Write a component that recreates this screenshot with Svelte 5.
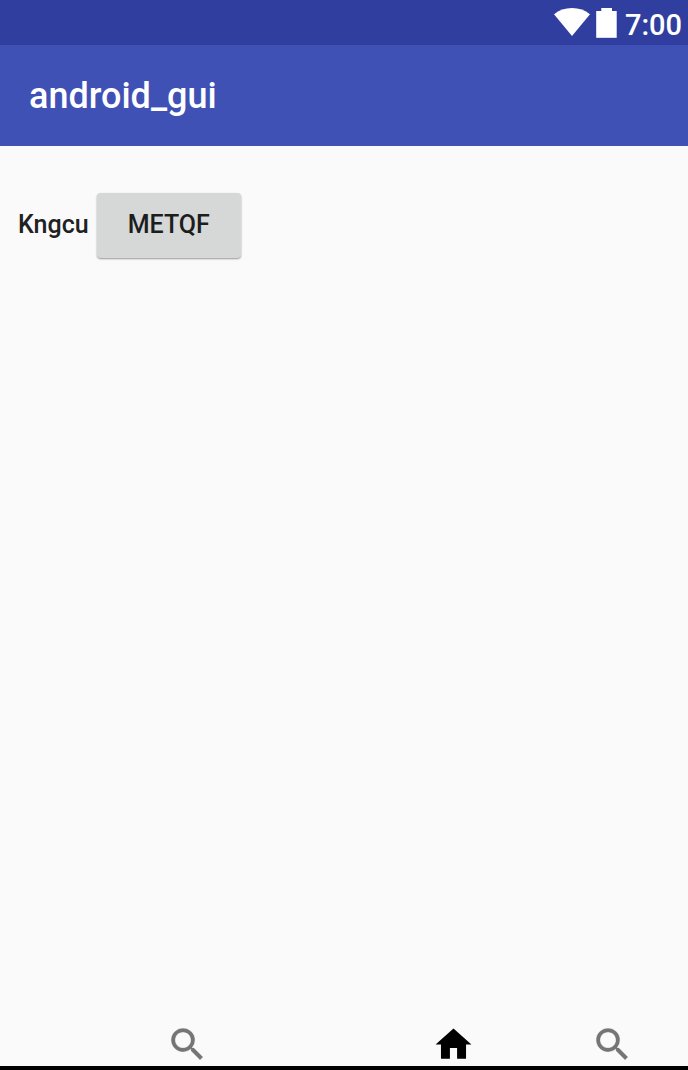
<script>
  const searchPath =
    'M15.5 14h-.79l-.28-.27A6.471 6.471 0 0 0 16 9.5 6.5 6.5 0 1 0 9.5 16c1.61 0 3.09-.59 4.23-1.57l.27.28v.79l5 4.99L20.49 19l-4.99-5zm-6 0C7.01 14 5 11.99 5 9.5S7.01 5 9.5 5 14 7.01 14 9.5 11.99 14 9.5 14z';
  const homePath = 'M10 20v-6h4v6h5v-8h3L12 3 2 12h3v8z';
  const items = [
    { label: 'Search', path: searchPath, active: false },
    { label: 'Home', path: homePath, active: true },
    { label: 'Search more', path: searchPath, active: false }
  ];
</script>

<div class="screen">
  <div class="status">
    <svg width="36" height="28" viewBox="0 0 36 28" aria-hidden="true">
      <path d="M0 6.2C5 2 11 0 18 0s13 2 18 6.2L18 28z" fill="#fff" />
    </svg>
    <svg width="21" height="30" viewBox="0 0 21 30" aria-hidden="true">
      <path d="M5.3 0h10.7v3h4.7v26H0.2V3h5.1z" fill="#fff" />
      <path d="M0.2 29h20.5v1H0.2z" fill="#d9dcf0" />
    </svg>
    <time>7:00</time>
  </div>

  <header>
    <h1>android_gui</h1>
  </header>

  <main>
    <span class="label">Kngcu</span>
    <button class="action" type="button">METQF</button>
  </main>

  <nav>
    {#each items as item}
      <button type="button" class="tab" class:active={item.active} aria-label={item.label}>
        <svg width="43" height="43" viewBox="0 0 24 24" aria-hidden="true">
          <path d={item.path} />
        </svg>
      </button>
    {/each}
  </nav>
</div>

<style>
  :global(body) {
    margin: 0;
    background: #fafafa;
  }
  .screen {
    display: flex;
    flex-direction: column;
    box-sizing: border-box;
    min-height: 100vh;
    border-bottom: 4px solid #000;
    background: #fafafa;
    color: #212121;
    font-family: Roboto, sans-serif;
  }
  .status {
    display: flex;
    align-items: flex-start;
    justify-content: flex-end;
    gap: 6px;
    box-sizing: border-box;
    height: 45px;
    padding: 8px 6px 0 0;
    background: #303f9f;
    color: #fff;
  }
  time {
    margin-left: 2px;
    font-size: 29px;
    font-weight: 500;
    line-height: 34px;
  }
  header {
    display: flex;
    align-items: center;
    height: 101px;
    padding: 0 29px;
    background: #3f51b5;
    color: #fff;
  }
  h1 {
    margin: 0;
    font-size: 36px;
    font-weight: 500;
    line-height: 42px;
  }
  main {
    display: flex;
    flex: 1;
    align-items: flex-start;
    gap: 8px;
    padding: 47px 18px;
  }
  .label,
  .action {
    font-size: 25px;
    font-weight: 500;
    line-height: 64px;
  }
  .action {
    padding: 0 31px 1px;
    border: 0;
    border-radius: 4px;
    background: #d6d7d7;
    box-shadow: 0 1px 2px rgba(0, 0, 0, 0.4);
    color: #1c1d1d;
    font-family: inherit;
  }
  nav {
    display: grid;
    grid-template-columns: 166fr auto 223fr auto 116fr auto 54fr;
  }
  .tab {
    display: flex;
    grid-column: 2;
    padding: 0;
    border: 0;
    background: none;
    color: #757575;
  }
  .tab:nth-child(2) {
    grid-column: 4;
  }
  .tab:nth-child(3) {
    grid-column: 6;
  }
  .tab path {
    fill: currentColor;
    stroke: currentColor;
    stroke-width: 0.2;
    stroke-linejoin: round;
  }
  .tab.active {
    color: #000;
  }
  .tab.active path {
    stroke: none;
  }
</style>
